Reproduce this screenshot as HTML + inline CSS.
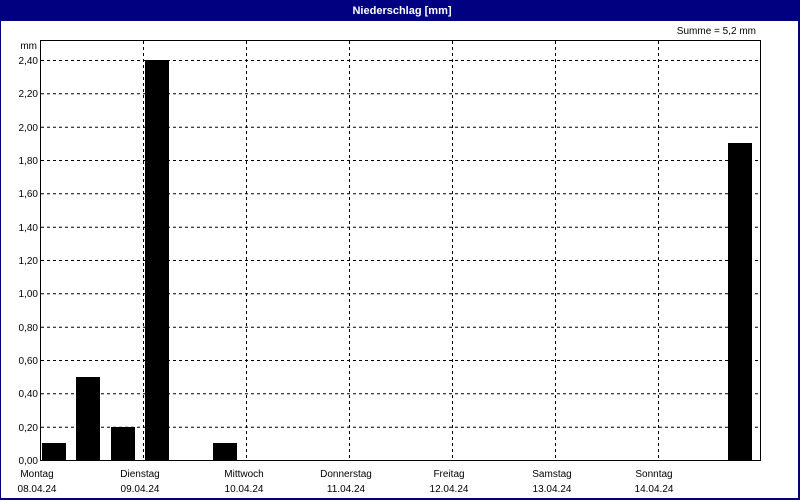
<!DOCTYPE html>
<html><head><meta charset="utf-8"><style>
html,body{margin:0;padding:0;background:#fff}
svg{display:block;font-family:"Liberation Sans",sans-serif}
</style></head><body>
<svg width="800" height="500" xmlns="http://www.w3.org/2000/svg">
<rect x="0" y="0" width="800" height="500" fill="#000080"/>
<rect x="1" y="21" width="797" height="477" fill="#fff"/>
<text x="402" y="14" fill="#fff" font-size="11" font-weight="bold" text-anchor="middle">Niederschlag [mm]</text>
<text x="756" y="34" fill="#000" font-size="10" text-anchor="end">Summe = 5,2 mm</text>
<text x="37" y="49" fill="#000" font-size="10" text-anchor="end">mm</text>
<g stroke="#000" stroke-width="1" stroke-dasharray="3,3" fill="none">
<path d="M41 60.5H760M41 93.8H760M41 127.2H760M41 160.5H760M41 193.8H760M41 227.2H760M41 260.5H760M41 293.8H760M41 327.2H760M41 360.5H760M41 393.8H760M41 427.2H760"/>
<path d="M143.5 41V461M246.5 41V461M349.5 41V461M452.5 41V461M555.5 41V461M658.5 41V461"/>
</g>
<g fill="#000">
<rect x="42" y="443" width="24" height="18"/>
<rect x="76" y="377" width="24" height="84"/>
<rect x="111" y="427" width="24" height="34"/>
<rect x="145" y="60" width="24" height="401"/>
<rect x="213" y="443" width="24" height="18"/>
<rect x="728" y="143" width="24" height="318"/>
</g>
<rect x="40.5" y="40.5" width="720" height="420" fill="none" stroke="#000" stroke-width="1"/>
<g font-size="10" fill="#000" text-anchor="end">
<text x="38" y="64">2,40</text><text x="38" y="97">2,20</text><text x="38" y="131">2,00</text>
<text x="38" y="164">1,80</text><text x="38" y="197">1,60</text><text x="38" y="231">1,40</text>
<text x="38" y="264">1,20</text><text x="38" y="297">1,00</text><text x="38" y="331">0,80</text>
<text x="38" y="364">0,60</text><text x="38" y="397">0,40</text><text x="38" y="431">0,20</text>
<text x="38" y="464">0,00</text>
</g>
<g font-size="10" fill="#000" text-anchor="middle">
<text x="37" y="477">Montag</text><text x="37" y="492">08.04.24</text>
<text x="140" y="477">Dienstag</text><text x="140" y="492">09.04.24</text>
<text x="244" y="477">Mittwoch</text><text x="244" y="492">10.04.24</text>
<text x="346" y="477">Donnerstag</text><text x="346" y="492">11.04.24</text>
<text x="449" y="477">Freitag</text><text x="449" y="492">12.04.24</text>
<text x="552" y="477">Samstag</text><text x="552" y="492">13.04.24</text>
<text x="654" y="477">Sonntag</text><text x="654" y="492">14.04.24</text>
</g>
</svg>
</body></html>
